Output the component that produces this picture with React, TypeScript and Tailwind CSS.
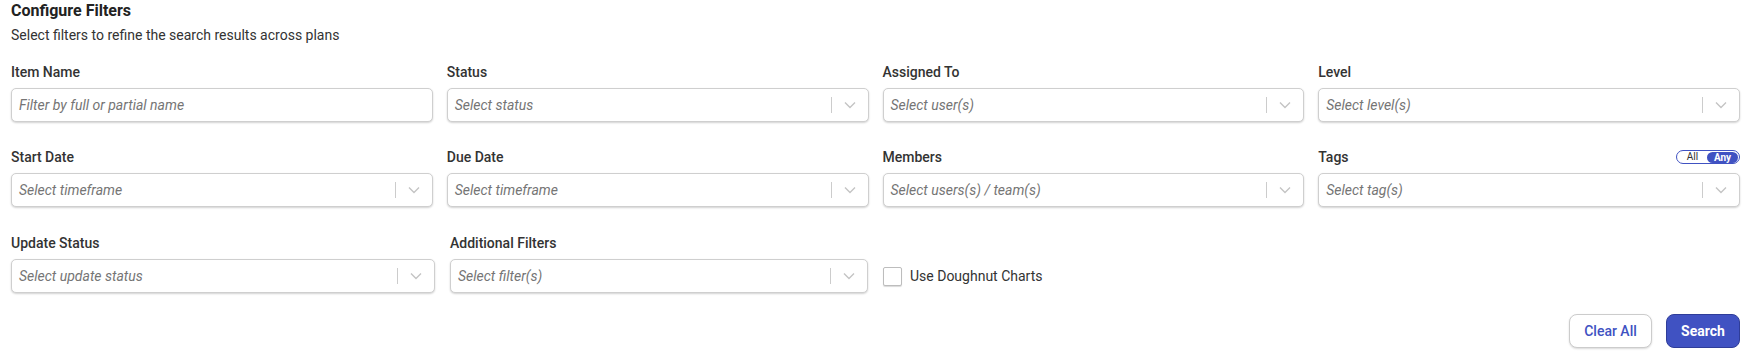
import React from "react";

function Chevron() {
  return (
    <svg width="12" height="8" viewBox="0 0 12 8" fill="none">
      <path d="M1 1.5 L6 6.5 L11 1.5" stroke="#c4c4c4" strokeWidth="1.4" />
    </svg>
  );
}

function SelectBox({ placeholder }: { placeholder: string }) {
  return (
    <div className="flex h-[34px] items-center rounded-[5px] border border-[#cfcfcf] bg-white shadow-[0_1px_2px_rgba(0,0,0,0.18)]">
      <span className="flex-1 truncate pl-[7px] text-[14px] italic text-[#757575]">{placeholder}</span>
      <span className="h-[16px] w-px bg-[#cccccc]" />
      <span className="flex w-[36px] items-center justify-center">
        <Chevron />
      </span>
    </div>
  );
}

function InputBox({ placeholder }: { placeholder: string }) {
  return (
    <div className="flex h-[34px] items-center rounded-[5px] border border-[#cfcfcf] bg-white shadow-[0_1px_2px_rgba(0,0,0,0.18)]">
      <span className="flex-1 truncate pl-[7px] text-[14px] italic text-[#757575]">{placeholder}</span>
    </div>
  );
}

function Field({
  label,
  children,
  extra,
}: {
  label: string;
  children: React.ReactNode;
  extra?: React.ReactNode;
}) {
  return (
    <div className="flex flex-col">
      <div className="flex h-[18px] items-center justify-between">
        <span className="text-[14px] font-medium leading-[18px] text-[#333333]">{label}</span>
        {extra}
      </div>
      <div className="mt-[7px]">{children}</div>
    </div>
  );
}

function Toggle() {
  return (
    <div className="flex h-[14px] w-[64px] items-center rounded-full border border-[#4052c2] bg-white p-px">
      <span className="flex-1 text-center text-[10px] leading-[12px] text-[#333333]">All</span>
      <span className="flex h-[11px] w-[31px] items-center justify-center rounded-full bg-[#4052c2] text-[10px] font-bold leading-[11px] text-white">
        Any
      </span>
    </div>
  );
}

export default function App() {
  return (
    <div className="bg-white px-[11px] pb-[12px] font-['Roboto',sans-serif] text-[#333333]">
      <h2 className="pt-px text-[16px] font-bold leading-[20px] text-[#222222]">Configure Filters</h2>
      <p className="mt-[4px] text-[14px] leading-[20px] text-[#333333]">
        Select filters to refine the search results across plans
      </p>

      <div className="mt-[18px] grid grid-cols-4 gap-x-[14px] gap-y-[26px]">
        <Field label="Item Name">
          <InputBox placeholder="Filter by full or partial name" />
        </Field>
        <Field label="Status">
          <SelectBox placeholder="Select status" />
        </Field>
        <Field label="Assigned To">
          <SelectBox placeholder="Select user(s)" />
        </Field>
        <Field label="Level">
          <SelectBox placeholder="Select level(s)" />
        </Field>
        <Field label="Start Date">
          <SelectBox placeholder="Select timeframe" />
        </Field>
        <Field label="Due Date">
          <SelectBox placeholder="Select timeframe" />
        </Field>
        <Field label="Members">
          <SelectBox placeholder="Select users(s) / team(s)" />
        </Field>
        <Field label="Tags" extra={<Toggle />}>
          <SelectBox placeholder="Select tag(s)" />
        </Field>
      </div>

      <div className="mt-[27px] flex items-end">
        <div className="w-[424px]">
          <Field label="Update Status">
            <SelectBox placeholder="Select update status" />
          </Field>
        </div>
        <div className="ml-[15px] w-[418px]">
          <Field label="Additional Filters">
            <SelectBox placeholder="Select filter(s)" />
          </Field>
        </div>
        <label className="ml-[15px] flex h-[34px] items-center gap-[8px]">
          <span className="h-[19px] w-[19px] rounded-[2px] border border-[#bdbdbd] bg-white shadow-[0_1px_1px_rgba(0,0,0,0.15)]" />
          <span className="text-[14px] text-[#333333]">Use Doughnut Charts</span>
        </label>
      </div>

      <div className="mt-[21px] flex justify-end gap-[14px]">
        <button className="h-[34px] w-[83px] rounded-[8px] border border-[#cccccc] bg-white text-[14px] font-medium text-[#4052c2] shadow-[0_1px_2px_rgba(0,0,0,0.15)]">
          Clear All
        </button>
        <button className="h-[34px] w-[74px] rounded-[8px] border border-[#2f3d99] bg-[#4052c2] text-[14px] font-bold text-white">
          Search
        </button>
      </div>
    </div>
  );
}
